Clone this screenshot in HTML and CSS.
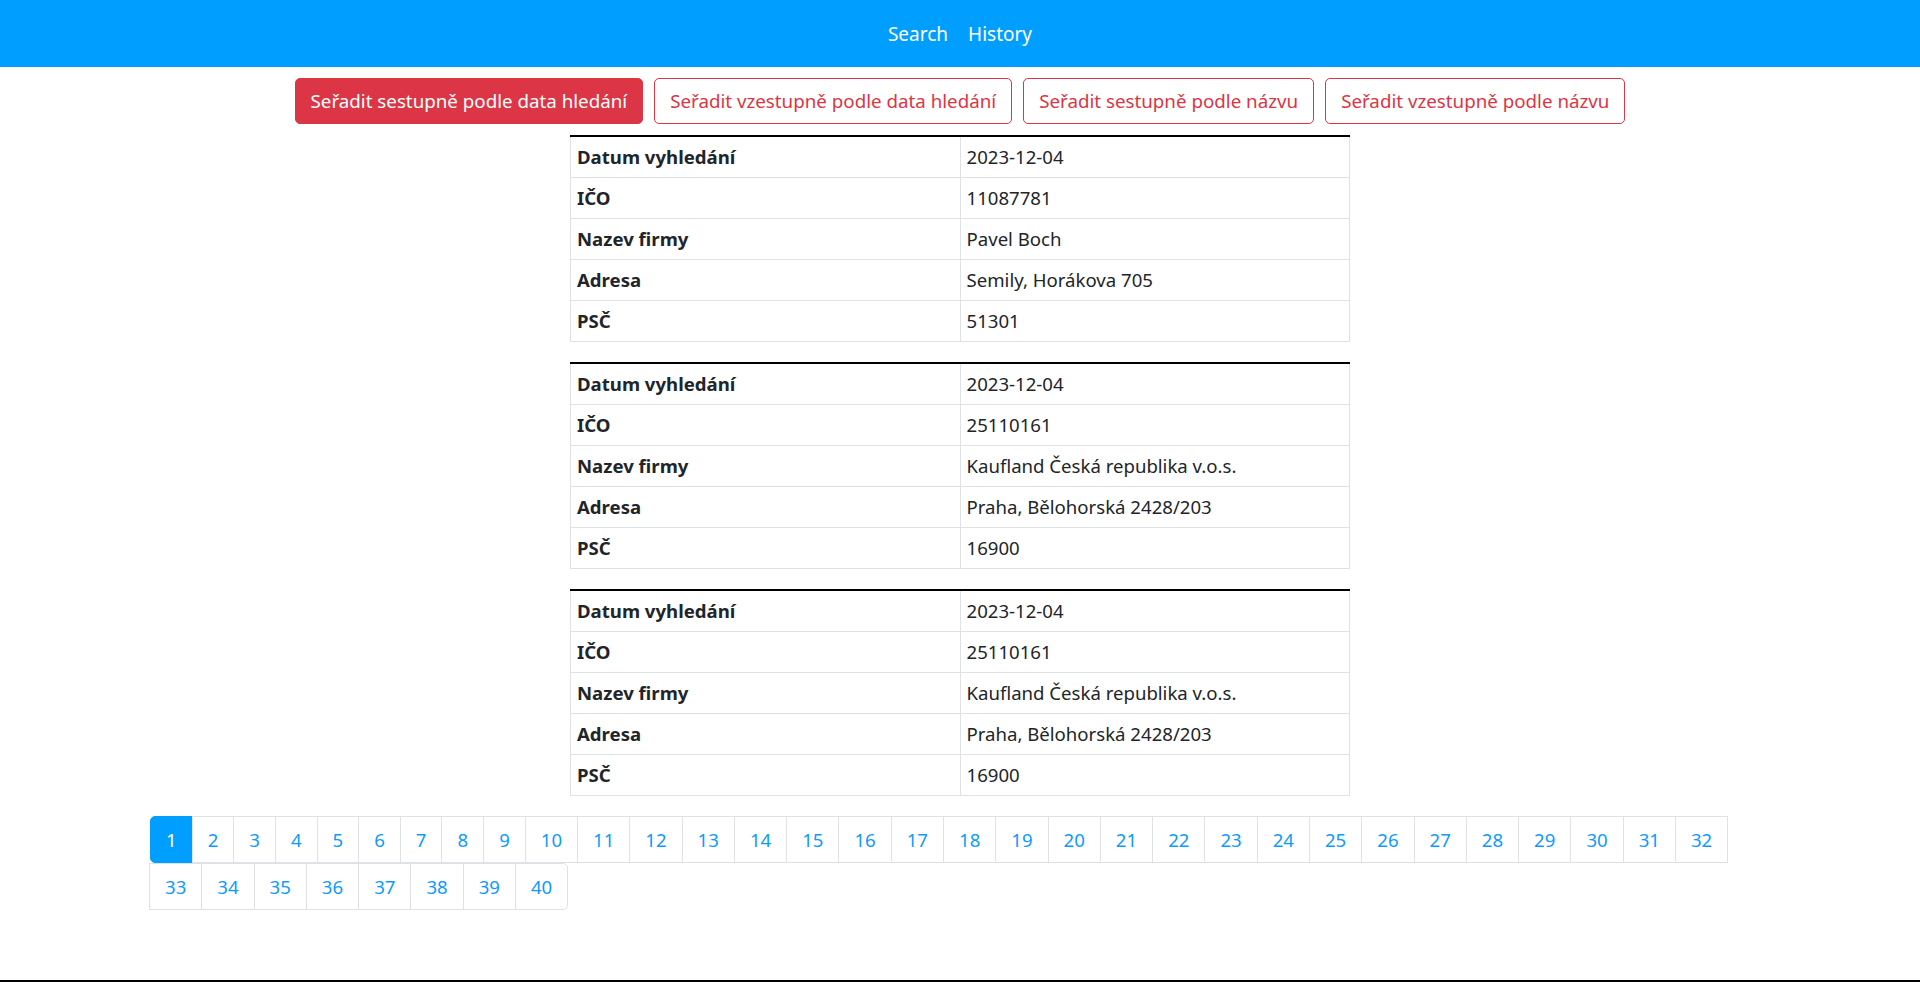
FILE: index.html
```html
<!DOCTYPE html>
<html lang="cs">
<head>
<meta charset="utf-8">
<title>History</title>
<link rel="stylesheet" href="styles.css">
</head>
<body>
<nav class="navbar">
  <a class="nav-link" href="#">Search</a>
  <a class="nav-link" href="#">History</a>
</nav>
<div class="sort-bar">
  <button class="btn btn-danger">Seřadit sestupně podle data hledání</button>
  <button class="btn btn-outline">Seřadit vzestupně podle data hledání</button>
  <button class="btn btn-outline">Seřadit sestupně podle názvu</button>
  <button class="btn btn-outline">Seřadit vzestupně podle názvu</button>
</div>
<main class="results">
  <table class="record">
    <thead></thead>
    <tbody>
      <tr><th>Datum vyhledání</th><td>2023-12-04</td></tr>
      <tr><th>IČO</th><td>11087781</td></tr>
      <tr><th>Nazev firmy</th><td>Pavel Boch</td></tr>
      <tr><th>Adresa</th><td>Semily, Horákova 705</td></tr>
      <tr><th>PSČ</th><td>51301</td></tr>
    </tbody>
  </table>
  <table class="record">
    <thead></thead>
    <tbody>
      <tr><th>Datum vyhledání</th><td>2023-12-04</td></tr>
      <tr><th>IČO</th><td>25110161</td></tr>
      <tr><th>Nazev firmy</th><td>Kaufland Česká republika v.o.s.</td></tr>
      <tr><th>Adresa</th><td>Praha, Bělohorská 2428/203</td></tr>
      <tr><th>PSČ</th><td>16900</td></tr>
    </tbody>
  </table>
  <table class="record">
    <thead></thead>
    <tbody>
      <tr><th>Datum vyhledání</th><td>2023-12-04</td></tr>
      <tr><th>IČO</th><td>25110161</td></tr>
      <tr><th>Nazev firmy</th><td>Kaufland Česká republika v.o.s.</td></tr>
      <tr><th>Adresa</th><td>Praha, Bělohorská 2428/203</td></tr>
      <tr><th>PSČ</th><td>16900</td></tr>
    </tbody>
  </table>
</main>
<div class="container">
  <ul class="pagination">
    <li class="page-item active"><a class="page-link" href="#">1</a></li>
    <li class="page-item"><a class="page-link" href="#">2</a></li>
    <li class="page-item"><a class="page-link" href="#">3</a></li>
    <li class="page-item"><a class="page-link" href="#">4</a></li>
    <li class="page-item"><a class="page-link" href="#">5</a></li>
    <li class="page-item"><a class="page-link" href="#">6</a></li>
    <li class="page-item"><a class="page-link" href="#">7</a></li>
    <li class="page-item"><a class="page-link" href="#">8</a></li>
    <li class="page-item"><a class="page-link" href="#">9</a></li>
    <li class="page-item"><a class="page-link" href="#">10</a></li>
    <li class="page-item"><a class="page-link" href="#">11</a></li>
    <li class="page-item"><a class="page-link" href="#">12</a></li>
    <li class="page-item"><a class="page-link" href="#">13</a></li>
    <li class="page-item"><a class="page-link" href="#">14</a></li>
    <li class="page-item"><a class="page-link" href="#">15</a></li>
    <li class="page-item"><a class="page-link" href="#">16</a></li>
    <li class="page-item"><a class="page-link" href="#">17</a></li>
    <li class="page-item"><a class="page-link" href="#">18</a></li>
    <li class="page-item"><a class="page-link" href="#">19</a></li>
    <li class="page-item"><a class="page-link" href="#">20</a></li>
    <li class="page-item"><a class="page-link" href="#">21</a></li>
    <li class="page-item"><a class="page-link" href="#">22</a></li>
    <li class="page-item"><a class="page-link" href="#">23</a></li>
    <li class="page-item"><a class="page-link" href="#">24</a></li>
    <li class="page-item"><a class="page-link" href="#">25</a></li>
    <li class="page-item"><a class="page-link" href="#">26</a></li>
    <li class="page-item"><a class="page-link" href="#">27</a></li>
    <li class="page-item"><a class="page-link" href="#">28</a></li>
    <li class="page-item"><a class="page-link" href="#">29</a></li>
    <li class="page-item"><a class="page-link" href="#">30</a></li>
    <li class="page-item"><a class="page-link" href="#">31</a></li>
    <li class="page-item"><a class="page-link" href="#">32</a></li>
    <li class="page-item"><a class="page-link" href="#">33</a></li>
    <li class="page-item"><a class="page-link" href="#">34</a></li>
    <li class="page-item"><a class="page-link" href="#">35</a></li>
    <li class="page-item"><a class="page-link" href="#">36</a></li>
    <li class="page-item"><a class="page-link" href="#">37</a></li>
    <li class="page-item"><a class="page-link" href="#">38</a></li>
    <li class="page-item"><a class="page-link" href="#">39</a></li>
    <li class="page-item"><a class="page-link" href="#">40</a></li>
  </ul>
</div>
<footer class="footer"></footer>
</body>
</html>
```
FILE: styles.css
```css
* { box-sizing: border-box; }

body {
  margin: 0;
  font-family: "Noto Sans", "Open Sans", sans-serif;
  font-size: 18.6px;
  line-height: 30px;
  color: #212529;
  background: #fff;
}

.navbar {
  height: 67px;
  background: #009fff;
  display: flex;
  justify-content: center;
  align-items: center;
}

.nav-link {
  color: #fff;
  text-decoration: none;
  padding: 0 10px;
  font-size: 19px;
}

.sort-bar {
  display: flex;
  justify-content: center;
  gap: 11px;
  margin-top: 11px;
}

.btn {
  font-family: inherit;
  font-size: 18.75px;
  line-height: 30px;
  padding: 7px 15px;
  border: 1px solid #dc3545;
  border-radius: 5px;
  cursor: pointer;
}

.btn-danger {
  background: #dc3545;
  color: #fff;
}

.btn-outline {
  background: #fff;
  color: #dc3545;
}

.results {
  margin-top: 11px;
}

.record {
  width: 780px;
  margin: 0 auto 20px;
  border-collapse: collapse;
  table-layout: fixed;
}

.record tbody {
  border-top: 2px solid #000;
}

.record th,
.record td {
  border: 1px solid #dee2e6;
  padding: 5px 6px;
  text-align: left;
  vertical-align: top;
  font-size: 18.6px;
  line-height: 30px;
}

.record th {
  font-weight: 700;
}

.record td {
  font-weight: 400;
}

.container {
  padding: 0 150px;
}

.pagination {
  list-style: none;
  margin: 0 0 20px;
  padding: 0;
  display: flex;
  flex-wrap: wrap;
}

.page-item + .page-item .page-link {
  margin-left: -1px;
}

.page-link {
  display: block;
  padding: 7.5px 15px;
  border: 1px solid #dee2e6;
  color: #0d9bff;
  text-decoration: none;
  font-size: 18.6px;
  line-height: 30px;
  background: #fff;
}

.page-item:first-child .page-link {
  border-radius: 5px 0 0 5px;
}

.page-item:last-child .page-link {
  border-radius: 0 5px 5px 0;
}

.page-item.active .page-link {
  background: #009fff;
  border-color: #009fff;
  color: #fff;
}

.footer {
  margin-top: 70px;
  border-top: 2px solid #000;
  height: 2px;
}
```
